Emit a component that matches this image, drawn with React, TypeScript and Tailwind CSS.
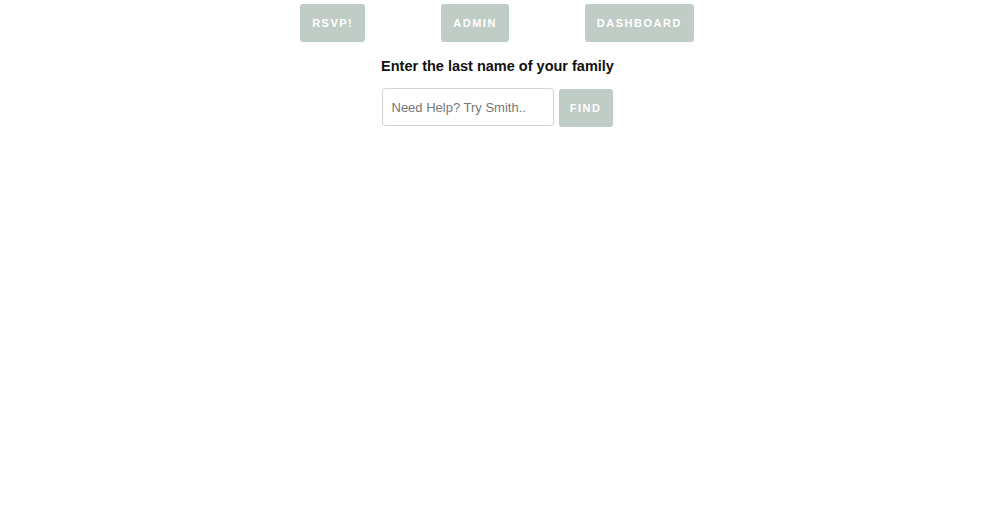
import React from "react";

export default function App() {
  const btn =
    "h-[38px] px-3 rounded-[3px] bg-[#c0ccc6] text-white text-[11px] font-bold tracking-[1.5px] flex items-center justify-center";
  return (
    <div className="w-[995px] h-[523px] bg-white" style={{ fontFamily: '"Liberation Sans", Arial, sans-serif' }}>
      <div className="flex justify-center gap-[76px] pt-[4px] pr-[1px]">
        <div className={btn}>RSVP!</div>
        <div className={btn}>ADMIN</div>
        <div className={btn}>DASHBOARD</div>
      </div>
      <div className="flex justify-center mt-[15px]">
        <h1 className="text-[14.5px] font-bold text-[#111] leading-[18px]">Enter the last name of your family</h1>
      </div>
      <div className="flex justify-center gap-[5px] mt-[13px] pr-[1px]">
        <input
          className="w-[172px] h-[38px] border border-[#d4d4d4] rounded-[3px] px-[9px] text-[13px] text-[#555] placeholder:text-[#777] outline-none"
          placeholder="Need Help? Try Smith.."
        />
        <div className={btn + " mt-[1px] w-[54px]"}>FIND</div>
      </div>
    </div>
  );
}
